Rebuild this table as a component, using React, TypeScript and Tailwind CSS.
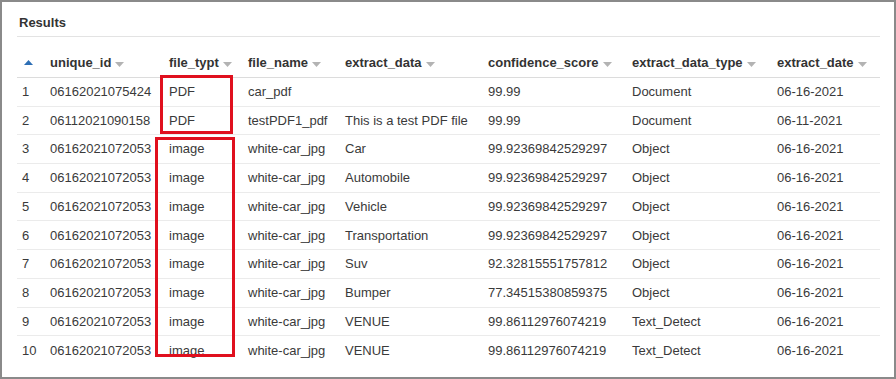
const COLS = [
  { key: "idx", label: "", w: "w-[28px]" },
  { key: "unique_id", label: "unique_id", w: "w-[119px]" },
  { key: "file_typt", label: "file_typt", w: "w-[79px]" },
  { key: "file_name", label: "file_name", w: "w-[97px]" },
  { key: "extract_data", label: "extract_data", w: "w-[143px]" },
  { key: "confidence_score", label: "confidence_score", w: "w-[144px]" },
  { key: "extract_data_type", label: "extract_data_type", w: "w-[145px]" },
  { key: "extract_date", label: "extract_date", w: "w-[108px]" },
];

const ROWS = [
  ["1", "06162021075424", "PDF", "car_pdf", "", "99.99", "Document", "06-16-2021"],
  ["2", "06112021090158", "PDF", "testPDF1_pdf", "This is a test PDF file", "99.99", "Document", "06-11-2021"],
  ["3", "06162021072053", "image", "white-car_jpg", "Car", "99.92369842529297", "Object", "06-16-2021"],
  ["4", "06162021072053", "image", "white-car_jpg", "Automobile", "99.92369842529297", "Object", "06-16-2021"],
  ["5", "06162021072053", "image", "white-car_jpg", "Vehicle", "99.92369842529297", "Object", "06-16-2021"],
  ["6", "06162021072053", "image", "white-car_jpg", "Transportation", "99.92369842529297", "Object", "06-16-2021"],
  ["7", "06162021072053", "image", "white-car_jpg", "Suv", "92.32815551757812", "Object", "06-16-2021"],
  ["8", "06162021072053", "image", "white-car_jpg", "Bumper", "77.34515380859375", "Object", "06-16-2021"],
  ["9", "06162021072053", "image", "white-car_jpg", "VENUE", "99.86112976074219", "Text_Detect", "06-16-2021"],
  ["10", "06162021072053", "image", "white-car_jpg", "VENUE", "99.86112976074219", "Text_Detect", "06-16-2021"],
];

const SortDown = () => (
  <svg width="9" height="5" viewBox="0 0 9 5" className="ml-[4px] mt-[2px]">
    <path d="M0 0h9L4.5 5z" fill="#b3b3b3" />
  </svg>
);

const SortUp = () => (
  <svg width="9" height="5" viewBox="0 0 9 5">
    <path d="M0 5h9L4.5 0z" fill="#2e6fb5" />
  </svg>
);

export default function App() {
  return (
    <div className="relative w-[896px] h-[379px] bg-white border-2 border-[#8a8a8a] font-['Liberation_Sans',Arial,sans-serif] text-[13px] text-[#3a3a3a]">
      <div className="pl-[15px] pr-[14px]">
        <div className="h-[35px] pt-[11px] pl-[2px] border-b border-[#e3e3e3] font-bold text-[13px] text-[#333]">
          Results
        </div>

        <div className="mt-[12px]">
          {/* header */}
          <div className="flex h-[29px] items-center border-b border-[#dcdcdc] font-bold text-[#333]">
            {COLS.map((c) => (
              <div key={c.key} className={`${c.w} pl-[5px] flex items-center`}>
                {c.key === "idx" ? (
                  <span className="pl-[2px] mb-[2px]"><SortUp /></span>
                ) : (
                  <>
                    <span>{c.label}</span>
                    <SortDown />
                  </>
                )}
              </div>
            ))}
          </div>

          {ROWS.map((r, i) => (
            <div
              key={r[0]}
              className={`flex h-[28.7px] items-center ${i < ROWS.length - 1 ? "border-b border-[#ebebeb]" : ""}`}
            >
              {r.map((v, j) => (
                <div key={j} className={`${COLS[j].w} pl-[5px] whitespace-nowrap`}>
                  {v}
                </div>
              ))}
            </div>
          ))}
        </div>
      </div>

      {/* annotation boxes */}
      <div className="absolute left-[158px] top-[73px] w-[73px] h-[59px] border-[3px] border-[#e0101e]" />
      <div className="absolute left-[153px] top-[135px] w-[80px] h-[220px] border-[3px] border-[#e0101e]" />
    </div>
  );
}
